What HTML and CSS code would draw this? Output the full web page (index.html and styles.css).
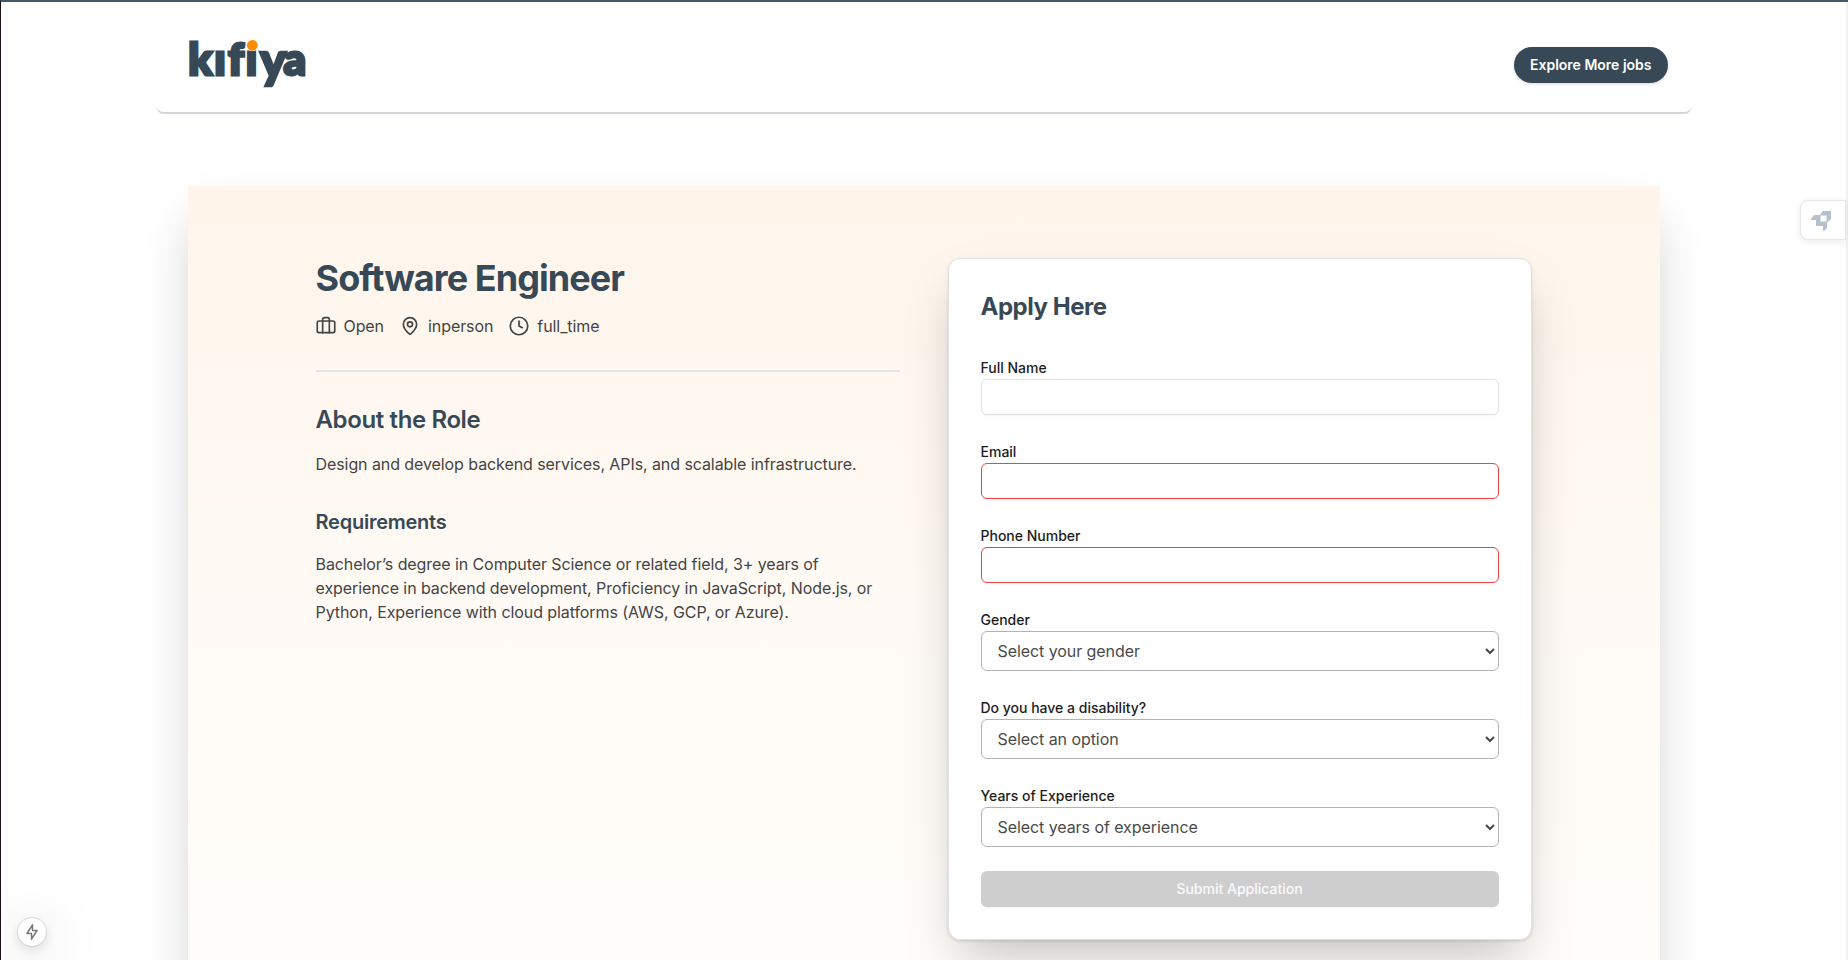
FILE: index.html
```html
<!DOCTYPE html>
<html lang="en">
<head>
<meta charset="utf-8">
<title>Software Engineer - Kifiya</title>
<link rel="stylesheet" href="styles.css">
</head>
<body>
<div class="page">
  <header class="header">
    <svg class="logo" viewBox="0 0 122 56" role="img" aria-label="kifiya">
      <text class="logo-text" x="0.300 26.300 40 57.800 72 95.500" y="37.600">kıfı<tspan class="logo-tail" y="40.500">y</tspan><tspan y="37.600">a</tspan></text>
      <circle class="logo-dot" cx="64.300" cy="8.300" r="5.400"/>
    </svg>
    <button class="explore">Explore More jobs</button>
  </header>

  <main class="job">
    <section class="details">
      <h1>Software Engineer</h1>
      <div class="meta">
        <span class="meta-item">
          <svg class="icon" viewBox="0 0 24 24"><path d="M16 20V4a2 2 0 0 0-2-2h-4a2 2 0 0 0-2 2v16"/><rect x="1.5" y="6" width="21" height="14" rx="2"/></svg>
          Open
        </span>
        <span class="meta-item">
          <svg class="icon" viewBox="0 0 24 24"><path d="M20 10c0 5-5.5 10.200-7.400 11.800a1 1 0 0 1-1.200 0C9.500 20.200 4 15 4 10a8 8 0 0 1 16 0"/><circle cx="12" cy="10" r="3"/></svg>
          inperson
        </span>
        <span class="meta-item">
          <svg class="icon" viewBox="0 0 24 24"><circle cx="12" cy="12" r="10.500"/><path d="M12 6v6l4 2"/></svg>
          full_time
        </span>
      </div>
      <hr class="rule">
      <h2>About the Role</h2>
      <p>Design and develop backend services, APIs, and scalable infrastructure.</p>
      <h3>Requirements</h3>
      <p>Bachelor’s degree in Computer Science or related field, 3+ years of experience in backend development, Proficiency in JavaScript, Node.js, or Python, Experience with cloud platforms (AWS, GCP, or Azure).</p>
    </section>

    <form class="apply">
      <h2 class="apply-title">Apply Here</h2>
      <div class="field"><label for="name">Full Name</label><input id="name" class="input" type="text"></div>
      <div class="field"><label for="email">Email</label><input id="email" class="input invalid" type="email"></div>
      <div class="field"><label for="phone">Phone Number</label><input id="phone" class="input invalid" type="tel"></div>
      <div class="field"><label for="gender">Gender</label><select id="gender" class="select"><option>Select your gender</option></select></div>
      <div class="field"><label for="disability">Do you have a disability?</label><select id="disability" class="select"><option>Select an option</option></select></div>
      <div class="field"><label for="years">Years of Experience</label><select id="years" class="select"><option>Select years of experience</option></select></div>
      <button class="submit" type="button">Submit Application</button>
    </form>
  </main>
</div>

<div class="side-tab">
  <svg class="rocket" viewBox="0 0 20 20"><path fill-rule="evenodd" d="M12 0h8v8l-4 3.500V17l-3 3h-1v-5H5V9H0V8l3-4h6zM9.500 4.500v6h6v-6z"/></svg>
</div>
<div class="bolt-badge">
  <svg class="bolt" viewBox="0 0 12 16"><path d="M6.500 .800v5.700H11L5.500 15.200V9.500H1z"/></svg>
</div>
</body>
</html>
```

FILE: styles.css
```css
* { box-sizing: border-box; margin: 0; }

body {
  height: 960px;
  overflow: hidden;
  border-top: 2px solid #465a67;
  border-left: 1px solid #1d0f1a;
  background: #fff;
  color: #444;
  font: 16px/24px Inter, "Liberation Sans", sans-serif;
  letter-spacing: -.08px;
}

.page {
  height: 958px;
  overflow: hidden;
  border-right: 2px solid #f1f1f1;
}

.header {
  display: flex;
  align-items: center;
  justify-content: space-between;
  width: 1536px;
  height: 112px;
  margin: 0 auto;
  padding: 16px 24px 0 32px;
  border-bottom: 2px solid #d1d5da;
  border-radius: 8px;
}

.logo { width: 122px; height: 56px; overflow: visible; }
.logo-text {
  font: 900 44px Lato, sans-serif;
  letter-spacing: 0;
  fill: #374957;
  stroke: #374957;
  stroke-width: 3px;
}
.logo-tail { font-size: 49px; stroke-width: 2.6px; }
.logo-dot { fill: #ff8c00; stroke: #fff; stroke-width: 1px; paint-order: stroke; }

.explore {
  height: 36px;
  padding: 0 16px;
  border: 0;
  border-radius: 18px;
  background: #374957;
  color: #fff;
  font: 600 14px/20px Inter, sans-serif;
  box-shadow: 0 1px 3px rgba(0, 0, 0, .15);
}

.job {
  display: grid;
  grid-template-columns: 1fr 1fr;
  gap: 48px;
  width: 1472px;
  height: 1000px;
  margin: 72px auto 0;
  padding: 72px 128px;
  align-items: start;
  background: linear-gradient(#fff5eb, #fffcf8 55%, #fffefb);
  box-shadow: 0 25px 50px -12px rgba(0, 0, 0, .25);
}

h1 { color: #374957; font-size: 36px; line-height: 40px; font-weight: 700; letter-spacing: -.93px; }
h2 { color: #374957; font-size: 24px; line-height: 32px; font-weight: 600; letter-spacing: -.38px; margin-bottom: 16px; }
h3 { color: #374957; font-size: 20px; line-height: 28px; font-weight: 600; letter-spacing: -.24px; margin: 32px 0 16px; }

.meta { display: flex; gap: 16px; margin-top: 16px; }
.meta-item { display: flex; align-items: center; gap: 8px; }
.icon { width: 20px; height: 20px; fill: none; stroke: #444; stroke-width: 2; stroke-linecap: round; stroke-linejoin: round; }
.rule { height: 2px; margin: 32px 0; border: 0; background: #e2e4ea; }

.apply {
  height: 682px;
  padding: 32px;
  border: 1px solid #e0e2e7;
  border-radius: 12px;
  background: #fff;
  box-shadow: 0 25px 50px -12px rgba(0, 0, 0, .25), 0 1px 3px rgba(0, 0, 0, .12);
}
.apply-title { font-weight: 700; margin-bottom: 32px; letter-spacing: -.48px; }

.field { margin-bottom: 24px; }
label {
  display: block;
  height: 24px;
  color: #1c1c1c;
  font-size: 14px;
  line-height: 26px;
  font-weight: 500;
  letter-spacing: 0;
}

.input {
  display: block;
  width: 100%;
  height: 36px;
  border: 1px solid #e2e2e5;
  border-radius: 6px;
  background: transparent;
  box-shadow: 0 1px 2px rgba(0, 0, 0, .05);
}
.invalid { border-color: #ef4444; }

.select {
  display: block;
  width: 100%;
  height: 40px;
  padding: 0 12px;
  border: 1px solid #b3b3b3;
  border-radius: 6px;
  background: #fff;
  color: #4a4a4a;
  font: 16px/24px Inter, sans-serif;
  letter-spacing: -.07px;
}

.submit {
  display: block;
  width: 100%;
  height: 36px;
  border: 0;
  border-radius: 6px;
  background: #cecece;
  color: #fafafa;
  font: 500 14px/20px Inter, sans-serif;
  box-shadow: 0 1px 2px rgba(0, 0, 0, .05);
}

.side-tab {
  position: absolute;
  top: 200px;
  right: 2px;
  display: flex;
  align-items: center;
  width: 46px;
  height: 40px;
  padding: 2px 0 0 10px;
  border: 1px solid #e5e7ef;
  border-radius: 8px 0 0 8px;
  background: #fff;
  box-shadow: 0 2px 8px rgba(0, 0, 0, .08);
}
.rocket { width: 20px; height: 20px; fill: #b4c0cc; }

.bolt-badge {
  position: absolute;
  left: 18px;
  top: 918px;
  display: flex;
  align-items: center;
  justify-content: center;
  width: 28px;
  height: 28px;
  border-radius: 50%;
  background: #fff;
  box-shadow: 0 0 0 1px rgba(0, 0, 0, .1), 0 4px 12px rgba(0, 0, 0, .12), 0 8px 60px rgba(0, 0, 0, .22);
}
.bolt { width: 12px; height: 16px; fill: none; stroke: #777; stroke-width: 1.500; stroke-linejoin: round; }
```
